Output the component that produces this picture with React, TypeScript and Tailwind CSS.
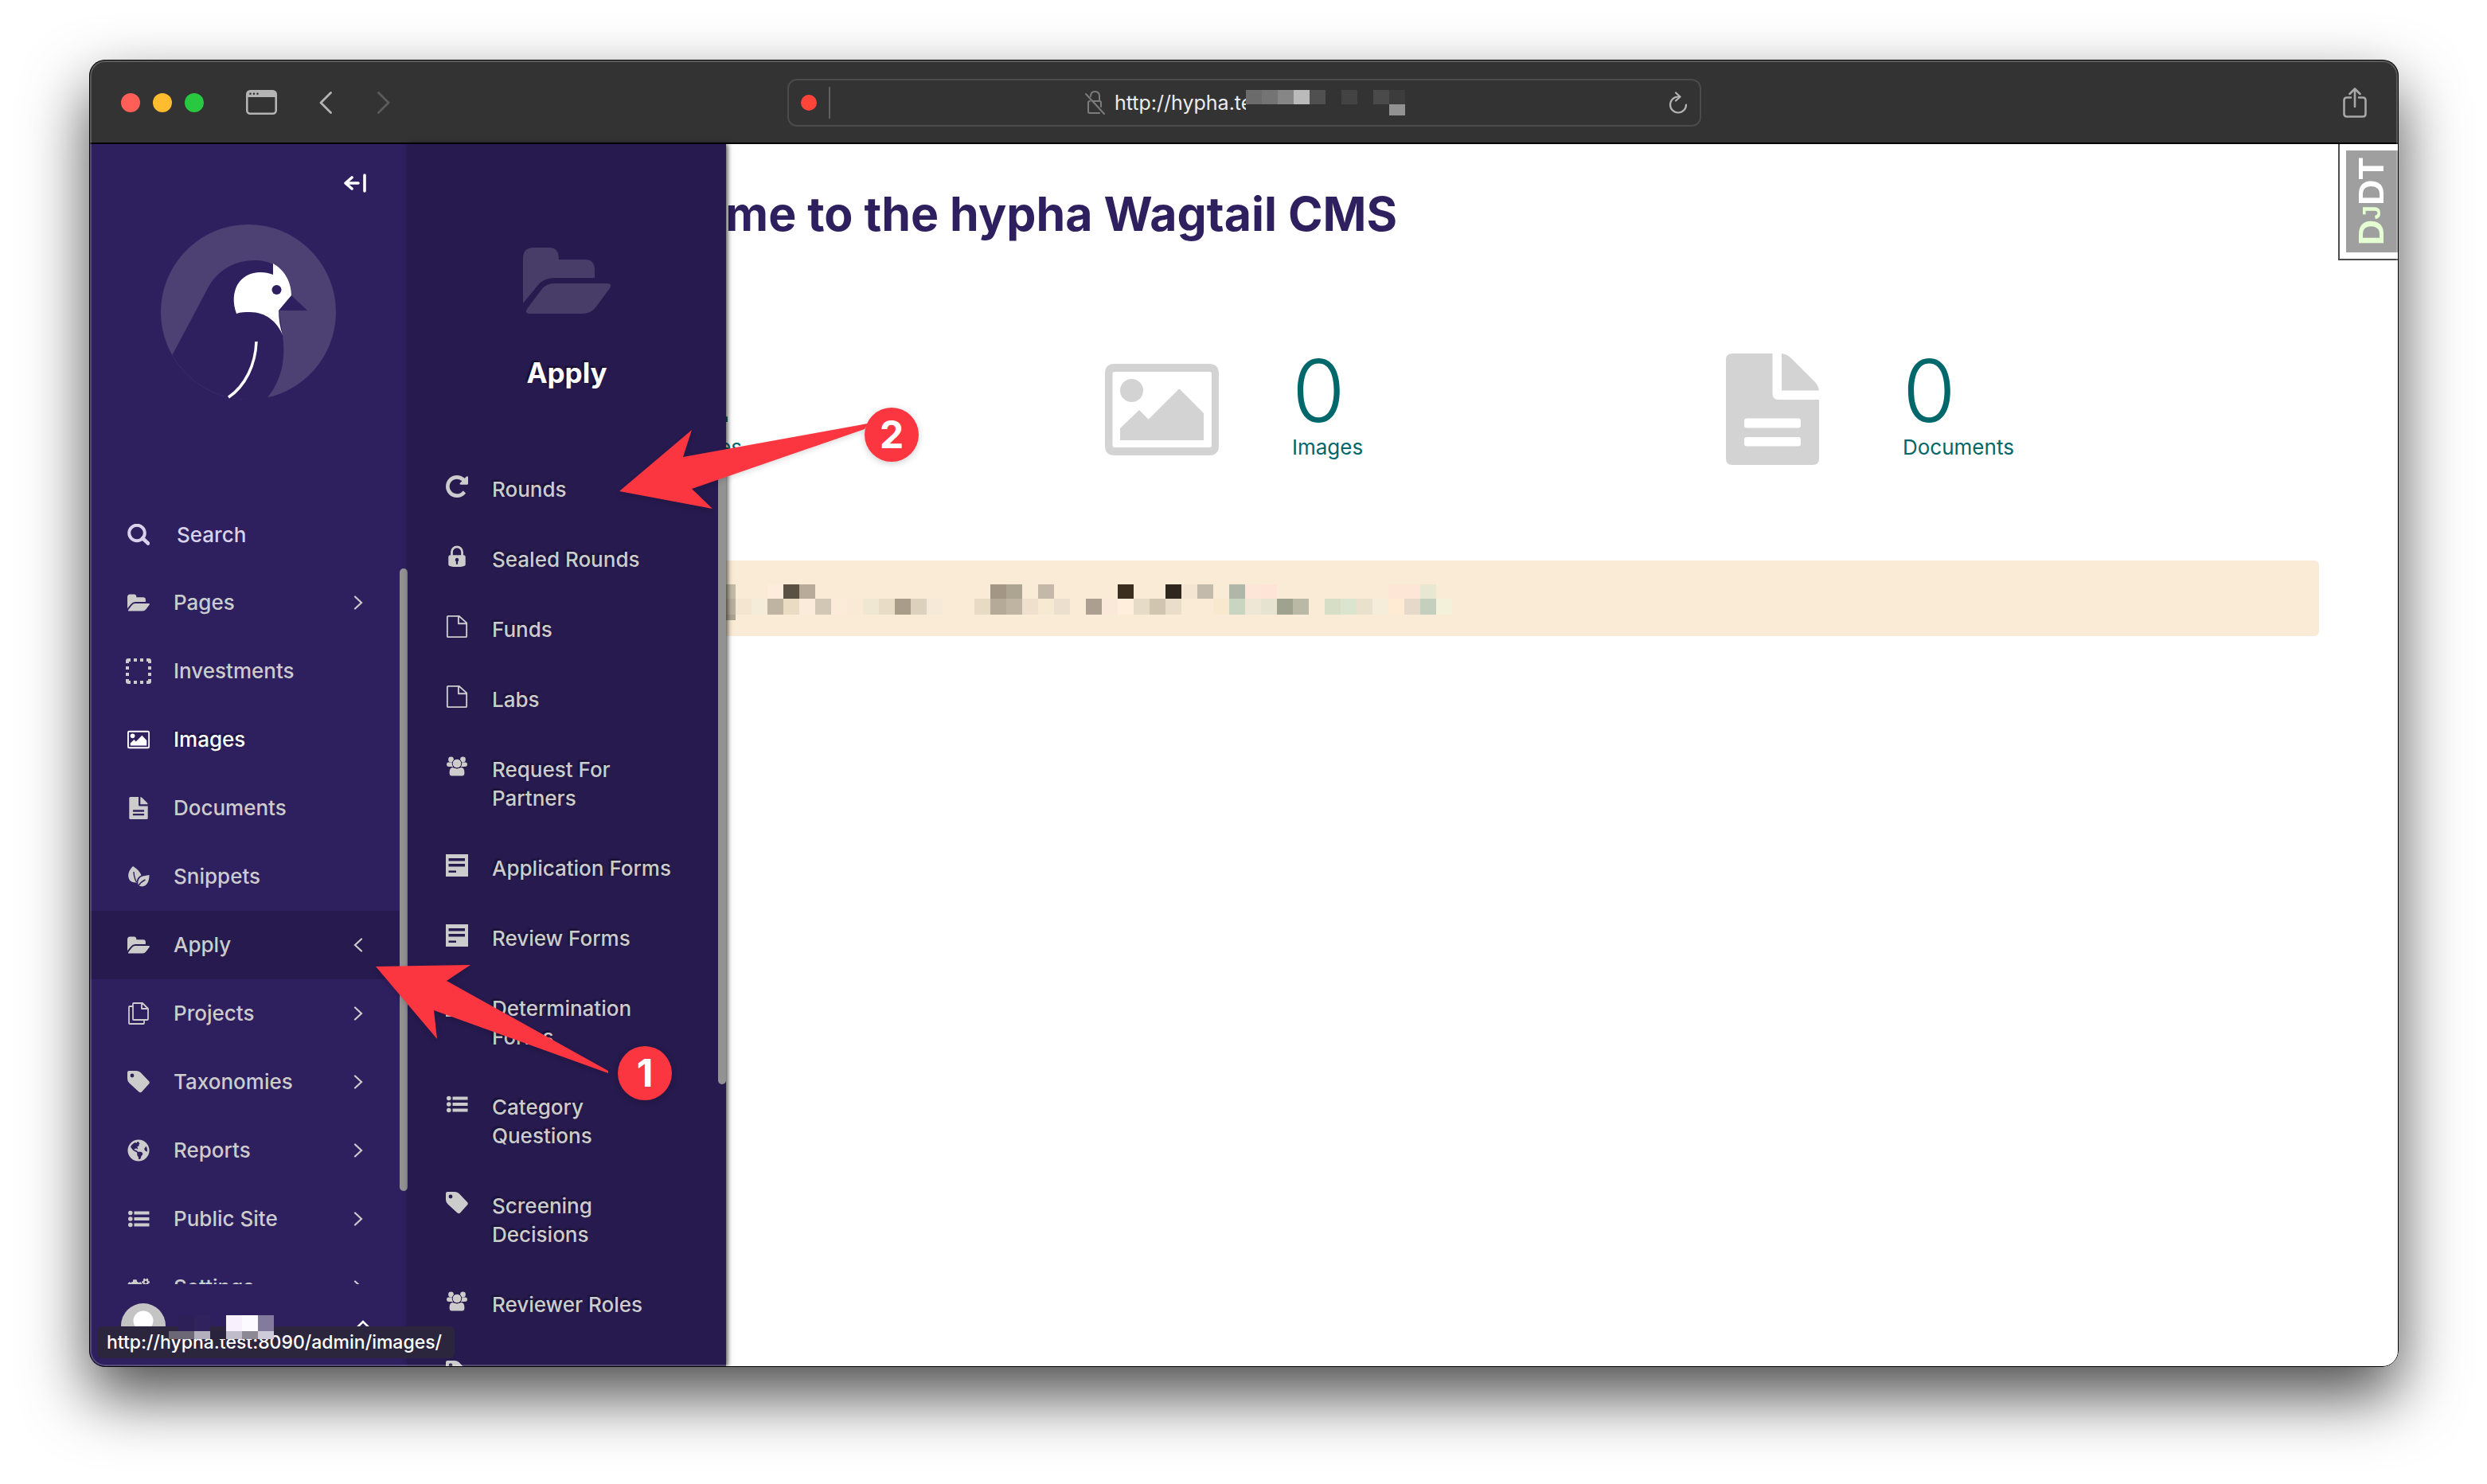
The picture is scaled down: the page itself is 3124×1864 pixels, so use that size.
import React from "react";
import { FaCogs, FaGlobeAmericas } from "react-icons/fa";

type IconProps = { className?: string };

/* ---------- icons ---------- */

const FolderOpen = ({ className }: IconProps) => (
  <svg viewBox="0 0 110 83" className={className} fill="currentColor" aria-hidden="true">
    <path d="M0 70V14Q0 0 13 0H33Q45 0 45 15H78Q90 15 90 28V38H39Q26 38 18 48Z" />
    <path d="M39 45H106Q112 45 109 51L92 74Q86 83 74 83H8Q2 83 5 77L23 53Q29 45 39 45Z" />
  </svg>
);

const PictureIcon = ({ className }: IconProps) => (
  <svg viewBox="0 0 143 115" className={className} fill="currentColor" aria-hidden="true">
    <path
      fillRule="evenodd"
      d="M12 0H131Q143 0 143 12V103Q143 115 131 115H12Q0 115 0 103V12Q0 0 12 0ZM12 10Q9.500 10 9.500 12.500V102.500Q9.500 105 12 105H131.500Q134 105 134 102.500V12.500Q134 10 131.500 10Z"
    />
    <circle cx="33.500" cy="33.500" r="14.500" />
    <path d="M19 96V81L43 58L54.700 69.700L93.300 31.300L124 62V96Z" />
  </svg>
);

const DocIcon = ({ className }: IconProps) => (
  <svg viewBox="0 0 117 140" className={className} fill="currentColor" aria-hidden="true">
    <path
      fillRule="evenodd"
      d="M8 0H58.500V50Q58.500 58 66 58H117V132Q117 140 109 140H8Q0 140 0 132V8Q0 0 8 0ZM26 81.500Q23 81.500 23 84.500V90.500Q23 93.500 26 93.500H91Q94 93.500 94 90.500V84.500Q94 81.500 91 81.500ZM26 105Q23 105 23 108V113.500Q23 116.500 26 116.500H91Q94 116.500 94 113.500V108Q94 105 91 105Z"
    />
    <path d="M70 0Q77 1 82 6L111 35Q116 40 117 46.500H70Z" />
  </svg>
);

const SearchIcon = ({ className }: IconProps) => (
  <svg viewBox="0 0 28 28" className={className} fill="none" stroke="currentColor" aria-hidden="true">
    <circle cx="12" cy="11.500" r="9.800" strokeWidth="4" />
    <path d="M19 18L26 24.500" strokeWidth="4.500" strokeLinecap="round" />
  </svg>
);

const PlaceholderIcon = ({ className }: IconProps) => (
  <svg viewBox="0 0 32 32" className={className} fill="currentColor" aria-hidden="true">
    <path d="M0 6V3Q0 0 3 0H6V4H4V6ZM26 0H29Q32 0 32 3V6H28V4H26ZM32 26V29Q32 32 29 32H26V28H28V26ZM6 32H3Q0 32 0 29V26H4V28H6Z" />
    <path d="M10 0h4v4h-4zM18 0h4v4h-4zM10 28h4v4h-4zM18 28h4v4h-4zM0 10h4v4H0zM0 18h4v4H0zM28 10h4v4h-4zM28 18h4v4h-4z" />
  </svg>
);

const LeavesIcon = ({ className }: IconProps) => (
  <svg viewBox="0 0 28 28" className={className} aria-hidden="true">
    <path
      fill="currentColor"
      d="M7 1C12 4 16 8 17.500 12.500C14 14 11.500 17 12 21.500C8 22 4 21 2 17C-.5 11 3 5 7 1Z"
    />
    <path
      fill="currentColor"
      d="M27.500 12C27.500 18 26 24 21 26C18 27 15.500 26 14 25C12.500 21.500 13.500 17 17 14.500C20 12.500 24 13 27.500 12Z"
    />
    <path d="M8 8Q8.500 16 11.500 21M14 25.500Q17 20.500 22.500 18" fill="none" stroke="#2e1f5e" strokeWidth="1.400" />
  </svg>
);

const CopyIcon = ({ className }: IconProps) => (
  <svg viewBox="0 0 28 28" className={className} fill="none" stroke="currentColor" strokeWidth="1.800" strokeLinejoin="round" aria-hidden="true">
    <path d="M8 1H19L26 8V21Q26 22 25 22H8Q7 22 7 21V2Q7 1 8 1ZM18 1.500V8H25.500" />
    <path d="M7 5H3Q2 5 2 6V26Q2 27 3 27H20Q21 27 21 26V22" />
  </svg>
);

const TagIcon = ({ className }: IconProps) => (
  <svg viewBox="0 0 28 28" className={className} fill="currentColor" aria-hidden="true">
    <path
      fillRule="evenodd"
      d="M2 0H11Q14 0 16.500 2L27 13Q28.500 14.500 27 16.500L18 26.500Q16.500 28 14.500 26.500L2.500 15.500Q0 13 0 10V2Q0 0 2 0ZM6 3.600A2.400 2.400 0 1 0 6 8.400A2.400 2.400 0 1 0 6 3.600Z"
    />
  </svg>
);

const ListIcon = ({ className }: IconProps) => (
  <svg viewBox="0 0 28 28" className={className} fill="currentColor" aria-hidden="true">
    <circle cx="3.800" cy="6.500" r="2.800" />
    <circle cx="3.800" cy="14" r="2.800" />
    <circle cx="3.800" cy="21.500" r="2.800" />
    <path d="M8.500 4.500H27.500V8.500H8.500ZM8.500 12H27.500V16H8.500ZM8.500 19.500H27.500V23.500H8.500Z" />
  </svg>
);

const RepeatIcon = ({ className }: IconProps) => (
  <svg viewBox="128 128 1536 1536" className={className} fill="currentColor" aria-hidden="true">
    <path d="M1664 256v448q0 26-19 45t-45 19h-448q-42 0-59-40-17-39 14-69l138-138q-148-137-349-137-104 0-198.500 40.500t-163.500 109.500-109.500 163.500-40.500 198.500 40.500 198.500 109.500 163.500 163.500 109.500 198.500 40.500q119 0 225-52t179-147q7-10 23-12 15 0 25 9l137 138q9 8 9.500 20.500t-7.500 22.500q-109 132-264 204.500t-327 72.500q-156 0-298-61t-245-164-164-245-61-298 61-298 164-245 245-164 298-61q147 0 284.500 55.500t244.500 156.500l130-129q29-31 70-14 39 17 39 59z" />
  </svg>
);

const LockIcon = ({ className }: IconProps) => (
  <svg viewBox="0 0 28 30" className={className} aria-hidden="true">
    <path d="M7 14V9A7 7 0 0 1 21 9V14" fill="none" stroke="currentColor" strokeWidth="3" />
    <path
      fill="currentColor"
      fillRule="evenodd"
      d="M5 13H23Q25.500 13 25.500 15.500V26Q25.500 29 14 29Q2.500 29 2.500 26V15.500Q2.500 13 5 13ZM14 17A2.600 2.600 0 0 0 12.800 21.800V25.500H15.200V21.800A2.600 2.600 0 0 0 14 17Z"
    />
  </svg>
);

const PageIcon = ({ className }: IconProps) => (
  <svg viewBox="0 0 28 30" className={className} fill="none" stroke="currentColor" strokeWidth="2" strokeLinejoin="round" aria-hidden="true">
    <path d="M2 1H17L27 10V28Q27 29 26 29H2Q1 29 1 28V2Q1 1 2 1ZM16 1.500V11H26.500" />
  </svg>
);

const GroupIcon = ({ className }: IconProps) => (
  <svg viewBox="0 0 28 28" className={className} aria-hidden="true">
    <g fill="currentColor">
      <circle cx="6.500" cy="5" r="3.400" />
      <circle cx="21.500" cy="5" r="3.400" />
      <path d="M1 11Q1 8.500 3 8.500H9V14H4Q1 14 1 11ZM27 11Q27 8.500 25 8.500H19V14H24Q27 14 27 11Z" />
    </g>
    <g fill="currentColor" stroke="#261a4e" strokeWidth="1">
      <path d="M4 22Q4 15 8.500 14.500Q14 17.500 19.500 14.500Q24 15 24 22Q24 26 21 26H7Q4 26 4 22Z" />
      <circle cx="14" cy="10" r="5.800" />
    </g>
  </svg>
);

const FormIcon = ({ className }: IconProps) => (
  <svg viewBox="0 0 28 28" className={className} fill="currentColor" aria-hidden="true">
    <path fillRule="evenodd" d="M0 0H28V28H0ZM3.500 5V8.500H24V5ZM3.500 12V15.500H24V12ZM3.500 20.500V23H13V20.500Z" />
  </svg>
);

const Chevron = ({ dir, className }: { dir: "left" | "right"; className?: string }) => (
  <svg viewBox="0 0 12 18" className={className} fill="none" stroke="currentColor" strokeWidth="2.200" strokeLinecap="round" aria-hidden="true">
    <path d={dir === "right" ? "M2 1.500L10 9L2 16.500" : "M10 1.500L2 9L10 16.500"} />
  </svg>
);

const WagtailLogo = () => (
  <svg viewBox="0 0 220 220" className="h-[220px] w-[220px]" role="img" aria-label="Wagtail">
    <circle cx="110" cy="110" r="110" fill="#4d4073" />
    <path
      fill="#2e1f5e"
      d="M14.500 163.700L59 80C72 56 94 45 118 45C127 45 135 47 141 50L164 89L184 108H148L153 139C157 170 152 196 132 220H110A110 110 0 0 1 14.500 163.700Z"
    />
    <path
      fill="#fff"
      d="M141 49C154 56 164 71 164 89L148 108C148 119 150 130 153 139C146 122 132 110 112 110C106 110 100 110 95 112C90 98 91 86 96 76C104 61 124 56 141 63Z"
    />
    <circle cx="145.500" cy="82" r="6" fill="#2e1f5e" />
    <path d="M120 147C119 176 106 203 85 217" fill="none" stroke="#fff" strokeWidth="3.500" />
  </svg>
);

/* ---------- pixelated text ---------- */

type MosaicRow = { height: string; cells: Record<number, string> };

const Mosaic = ({ rows, count }: { rows: MosaicRow[]; count: number }) => (
  <div aria-hidden="true">
    {rows.map((row, r) => (
      <div key={r} className={`flex ${row.height}`}>
        {Array.from({ length: count }, (_, i) => (
          <span key={i} className="w-5 shrink-0" style={{ backgroundColor: row.cells[i] }} />
        ))}
      </div>
    ))}
  </div>
);

const urlMosaic: MosaicRow[] = [
  { height: "h-[18px]", cells: { 0: "#6b6b6b", 1: "#747474", 2: "#868686", 3: "#bababa", 4: "#505050", 6: "#434343", 8: "#4a4a4a", 9: "#3c3c3c" } },
  { height: "h-[14px]", cells: { 9: "#929292" } },
];

const userMosaic: MosaicRow[] = [
  { height: "h-5", cells: { 1: "#2d2059", 2: "#30235d", 4: "#f8f0fc", 5: "#fcfaff", 6: "#827b9b" } },
  { height: "h-2.5", cells: { 0: "#6c6777", 1: "#6c6875", 2: "#b3afbd", 3: "#2a233d", 4: "#c0bcc9", 5: "#8c8995", 6: "#cecbda" } },
];

const bannerMosaic: MosaicRow[] = [
  {
    height: "h-[18px]",
    cells: {
      0: "#c3baa6", 3: "#fdecdb", 4: "#5b5143", 5: "#b8ab99", 17: "#a39684", 18: "#ada492", 20: "#c4b9a8", 25: "#3c2e1f",
      28: "#2f261e", 29: "#f4e4d2", 30: "#c3baac", 32: "#b1b7a8", 33: "#fde6d7", 34: "#fde4d6", 42: "#fde6d6", 43: "#fde6d6", 44: "#e8e8d2",
    },
  },
  {
    height: "h-5",
    cells: {
      0: "#b9af9d", 1: "#f3e5d0", 2: "#f4ecd8", 3: "#bfb3a1", 4: "#e9dcc3", 5: "#fbebdb", 6: "#d1c7b4", 7: "#fdebda", 8: "#f8ead5", 9: "#efe7d2",
      10: "#e9dcc7", 11: "#a99d8a", 12: "#dcd1bd", 13: "#f6e9d7", 16: "#e7dbc4", 17: "#b4aa97", 18: "#bfb3a2", 19: "#efe0cd", 20: "#f7ead3",
      21: "#ecdfce", 23: "#ac9f8f", 24: "#fae9d9", 25: "#feeedb", 26: "#e5dbc6", 27: "#d0c5ae", 28: "#eaddca", 31: "#f8e8ce", 32: "#c8d6c1",
      33: "#efe7d5", 34: "#e6e4d0", 35: "#9fa28f", 36: "#b9b9a5", 38: "#d6dfc5", 39: "#dae4ce", 40: "#e9e1cb", 41: "#f5ecda", 42: "#ffebd3",
      43: "#e7d9c9", 44: "#c5cfbd", 45: "#f3f1d9",
    },
  },
  { height: "h-[7px]", cells: { 0: "#aea492" } },
];

/* ---------- browser chrome ---------- */

const TitleBar = () => (
  <header className="flex h-[106px] shrink-0 items-center border-b-2 border-black bg-[#333333] pt-[3px] pr-10 pl-10">
    <div className="flex flex-1 items-center">
      <div className="flex gap-4">
        <button aria-label="Close window" className="h-6 w-6 rounded-full bg-[#ff5f57]" />
        <button aria-label="Minimize window" className="h-6 w-6 rounded-full bg-[#febc2e]" />
        <button aria-label="Zoom window" className="h-6 w-6 rounded-full bg-[#28c840]" />
      </div>
      <button aria-label="Tab overview" className="ml-[53px] text-[#b4b4b4]">
        <svg viewBox="0 0 39 31" className="h-[31px] w-[39px]" fill="none" aria-hidden="true">
          <rect x="1.300" y="1.300" width="36.400" height="28.400" rx="4" stroke="currentColor" strokeWidth="2.600" />
          <path d="M1 9V5Q1 1 5 1H34Q38 1 38 5V9Z" fill="currentColor" />
          <circle cx="5.500" cy="4.800" r="1.300" fill="#333" />
          <circle cx="10" cy="4.800" r="1.300" fill="#333" />
          <circle cx="14.500" cy="4.800" r="1.300" fill="#333" />
        </svg>
      </button>
      <button aria-label="Back" className="ml-[53px] text-[#b4b4b4]">
        <svg viewBox="0 0 16 28" className="h-7 w-4" fill="none" stroke="currentColor" strokeWidth="2.800" strokeLinecap="round" strokeLinejoin="round" aria-hidden="true">
          <path d="M14.500 1.500L2 14L14.500 26.500" />
        </svg>
      </button>
      <button aria-label="Forward" className="ml-[57px] text-[#5c5c5c]">
        <svg viewBox="0 0 16 28" className="h-7 w-4" fill="none" stroke="currentColor" strokeWidth="2.800" strokeLinecap="round" strokeLinejoin="round" aria-hidden="true">
          <path d="M1.500 1.500L14 14L1.500 26.500" />
        </svg>
      </button>
    </div>
    <div className="flex h-[60px] w-[1148px] items-center rounded-xl border-2 border-[#4b4b4d] px-[15px]">
      <span className="h-5 w-5 rounded-full bg-[#ff453a]" />
      <span className="ml-[15px] h-10 w-0.5 bg-[#606060]" />
      <div className="flex flex-1 items-center justify-center pr-2.5">
        <svg viewBox="0 0 25 30" className="h-[30px] w-[25px] text-[#7c7c7c]" fill="none" stroke="currentColor" strokeWidth="2" strokeLinecap="round" aria-hidden="true">
          <path d="M7 7Q7 1 12.500 1Q18 1 18 7V13M18 13Q20 13 20 15V20M9 13H18M6 13Q4 13 4 15V26Q4 28 6 28H18" />
          <path d="M1 4L24 29" />
        </svg>
        <input
          type="text"
          aria-label="Address"
          readOnly
          value="http://hypha.test"
          className="ml-3 w-[165px] bg-transparent text-[25px] leading-8 text-[#ececec] outline-none"
        />
        <Mosaic rows={urlMosaic} count={10} />
      </div>
      <button aria-label="Reload page" className="text-[#b4b4b4]">
        <svg viewBox="0 0 24 28" className="h-7 w-6" fill="none" stroke="currentColor" strokeWidth="2.200" strokeLinecap="round" strokeLinejoin="round" aria-hidden="true">
          <path d="M12 6.500A10 10 0 1 0 22 16.500" />
          <path d="M9 1.500L14.500 6.500L9 11.500" />
        </svg>
      </button>
    </div>
    <div className="flex flex-1 justify-end">
      <button aria-label="Share" className="text-[#a8a8a8]">
        <svg viewBox="0 0 30 38" className="h-[38px] w-[30px]" fill="none" stroke="currentColor" strokeWidth="2.600" strokeLinecap="round" strokeLinejoin="round" aria-hidden="true">
          <path d="M10 12.500H5Q1.500 12.500 1.500 16V33Q1.500 36.500 5 36.500H25Q28.500 36.500 28.500 33V16Q28.500 12.500 25 12.500H20" />
          <path d="M15 24V2M8.500 8L15 1.500L21.500 8" />
        </svg>
      </button>
    </div>
  </header>
);

/* ---------- sidebar ---------- */

type NavItem = {
  label: string;
  icon: (p: IconProps) => React.ReactNode;
  iconClass?: string;
  sub?: boolean;
  state?: "open" | "hover";
};

const navItems: NavItem[] = [
  { label: "Pages", icon: FolderOpen, sub: true },
  { label: "Investments", icon: PlaceholderIcon, iconClass: "h-8 w-8 -mx-0.5" },
  { label: "Images", icon: PictureIcon, state: "hover" },
  { label: "Documents", icon: DocIcon },
  { label: "Snippets", icon: LeavesIcon },
  { label: "Apply", icon: FolderOpen, sub: true, state: "open" },
  { label: "Projects", icon: CopyIcon, sub: true },
  { label: "Taxonomies", icon: TagIcon, sub: true },
  { label: "Reports", icon: ({ className }) => <FaGlobeAmericas className={className} />, sub: true },
  { label: "Public Site", icon: ListIcon, sub: true },
  { label: "Settings", icon: ({ className }) => <FaCogs className={className} />, sub: true },
];

const rowClass = "flex h-[86px] w-full items-center gap-[30px] pl-12 pr-14 text-left text-[26px] leading-9 font-medium";

const NavRow = ({ item }: { item: NavItem }) => {
  const Icon = item.icon;
  const icon = <Icon className={`shrink-0 ${item.iconClass ?? "h-7 w-7"}`} />;
  if (item.sub) {
    const open = item.state === "open";
    return (
      <button aria-expanded={open} className={`${rowClass} ${open ? "bg-[#261a4e]" : ""} text-[#cccccc]`}>
        {icon}
        <span className="flex-1">{item.label}</span>
        <Chevron dir={open ? "left" : "right"} className="h-[18px] w-3" />
      </button>
    );
  }
  return (
    <a
      href="#"
      className={`${rowClass} ${item.state === "hover" ? "text-white [text-shadow:-2px_-2px_1px_#00000066]" : "text-[#cccccc]"}`}
    >
      {icon}
      <span>{item.label}</span>
    </a>
  );
};

const Sidebar = () => (
  <aside className="relative flex w-[400px] shrink-0 flex-col bg-[#2e1f5e]">
    <div className="flex h-[101px] items-start justify-end pt-[37px] pr-[52px]">
      <button aria-label="Collapse sidebar" className="text-white">
        <svg viewBox="0 0 28 24" className="h-6 w-7" fill="none" stroke="currentColor" strokeWidth="3.600" strokeLinecap="round" strokeLinejoin="round" aria-hidden="true">
          <path d="M18 12H3M10 5L2 12L10 19M26 2V22" />
        </svg>
      </button>
    </div>
    <a href="#" className="flex justify-center">
      <WagtailLogo />
    </a>
    <form className="mt-[127px] flex h-[85px] shrink-0 items-center gap-[34px] pr-12 pl-12 text-[#d9d2ec]">
      <SearchIcon className="h-7 w-7 shrink-0" />
      <input
        type="search"
        aria-label="Search"
        placeholder="Search"
        className="w-full bg-transparent text-[26px] leading-9 font-medium outline-none placeholder:text-[#d9d2ec] placeholder:opacity-100"
      />
    </form>
    <div className="relative min-h-0 flex-1 overflow-hidden">
      <nav aria-label="Main menu">
        {navItems.map((item) => (
          <NavRow key={item.label} item={item} />
        ))}
      </nav>
      <div className="absolute top-0 right-0 h-[782px] w-2.5 rounded-full bg-[#929292]" />
    </div>
    <div className="flex h-[104px] shrink-0 items-start pt-6 pr-[46px] pl-10">
      <svg viewBox="0 0 56 56" className="h-14 w-14" aria-hidden="true">
        <circle cx="28" cy="28" r="28" fill="#c4c4c4" />
        <circle cx="28" cy="22" r="12.500" fill="#fff" />
        <path d="M8 47Q14 36 28 36Q42 36 48 47A28 28 0 0 1 8 47Z" fill="#fff" />
      </svg>
      <button aria-label="Account menu" className="ml-auto text-white">
        <svg viewBox="0 0 20 40" className="h-10 w-5" fill="none" stroke="currentColor" strokeWidth="2.600" strokeLinecap="round" aria-hidden="true">
          <path d="M2 31L10 23L18 31" />
        </svg>
      </button>
    </div>
  </aside>
);

/* ---------- submenu ---------- */

const subItems: { label: string; icon: (p: IconProps) => React.ReactNode }[] = [
  { label: "Rounds", icon: RepeatIcon },
  { label: "Sealed Rounds", icon: LockIcon },
  { label: "Funds", icon: PageIcon },
  { label: "Labs", icon: PageIcon },
  { label: "Request For Partners", icon: GroupIcon },
  { label: "Application Forms", icon: FormIcon },
  { label: "Review Forms", icon: FormIcon },
  { label: "Determination Forms", icon: FormIcon },
  { label: "Category Questions", icon: ListIcon },
  { label: "Screening Decisions", icon: TagIcon },
  { label: "Reviewer Roles", icon: GroupIcon },
  { label: "", icon: TagIcon },
];

const Submenu = () => (
  <section
    aria-label="Apply"
    className="absolute inset-y-0 left-0 z-10 w-[400px] bg-[#261a4e] shadow-[2px_0_6px_rgba(0,0,0,0.7)]"
  >
    <div className="h-full overflow-hidden">
      <div className="flex flex-col items-center pt-[130px]">
        <FolderOpen className="h-[83px] w-[110px] text-[#483c68]" />
        <h2 className="mt-[50px] mb-[79px] text-[35px] leading-[48px] font-bold text-white [text-shadow:-2px_-2px_2px_#00000088]">
          Apply
        </h2>
      </div>
      <ul>
        {subItems.map(({ label, icon: Icon }) => (
          <li key={label}>
            <a href="#" className="flex gap-[30px] py-[26px] pr-[50px] pl-12 text-[26px] leading-9 font-medium text-[#cccccc]">
              <Icon className="h-7 w-7 shrink-0" />
              <span className="[text-shadow:-2px_-2px_2px_#00000066]">{label}</span>
            </a>
          </li>
        ))}
      </ul>
    </div>
    <div className="absolute top-[404px] right-0 h-[777px] w-2.5 rounded-full bg-[#929292]" />
  </section>
);

/* ---------- dashboard ---------- */

const Stat = ({ icon, count, label }: { icon: React.ReactNode; count: number; label: string }) => (
  <a href="#" className="flex h-[142px] items-center gap-[84px] text-[#00676a]">
    <span className="flex w-40 shrink-0 justify-center text-[#d3d3d3]">{icon}</span>
    <span className="flex flex-col pb-2.5">
      <span className="text-[108px] leading-[106px] font-light">{count}</span>
      <span className="text-[26px] leading-9">{label}</span>
    </span>
  </a>
);

const DebugHandle = () => (
  <button
    aria-label="Show debug toolbar"
    className="absolute top-0 right-0 border-b-2 border-l-2 border-[#4d4d4d] bg-white pt-2 pb-2 pl-2"
  >
    <span className="flex h-32 w-[66px] items-center justify-center bg-[#9f9f9f] pr-1">
      <span className="rotate-180 font-['Liberation_Sans'] text-[45px] leading-none font-bold text-white [writing-mode:vertical-rl]">
        <span className="text-[#e6ffd2]">
          D<span className="text-[32px]">J</span>
        </span>
        DT
      </span>
    </span>
  </button>
);

const Dashboard = () => (
  <main className="relative min-w-0 flex-1 bg-white px-[100px] pt-[52px]">
    <h1 className="pl-[119px] text-[59px] leading-[72px] font-bold whitespace-nowrap text-[#2e1f5e]">
      Welcome to the hypha Wagtail CMS
    </h1>
    <div className="mt-[138px] grid grid-cols-3">
      <Stat icon={<FolderOpen className="h-[106px] w-[140px]" />} count={2} label="Pages" />
      <Stat icon={<PictureIcon className="h-[115px] w-[143px]" />} count={0} label="Images" />
      <Stat icon={<DocIcon className="h-[140px] w-[117px]" />} count={0} label="Documents" />
    </div>
    <div className="mt-[119px] h-[95px] rounded-md bg-[#faebd7] pt-[30px] pl-[292px]">
      <Mosaic rows={bannerMosaic} count={46} />
    </div>
    <DebugHandle />
  </main>
);

/* ---------- overlays ---------- */

const StatusBar = () => (
  <div className="absolute bottom-[11px] left-2.5 z-20">
    <div className="rounded-md bg-[#2b253d] pr-4 pl-3 text-[23px] leading-10 font-medium whitespace-nowrap text-white">
      http://hypha.test:8090/admin/images/
    </div>
    <div className="absolute bottom-6 left-[90px] overflow-hidden">
      <div className="-ml-2">
        <Mosaic rows={userMosaic} count={7} />
      </div>
    </div>
  </div>
);

const badgeClass =
  "absolute flex h-[68px] w-[68px] items-center justify-center rounded-full bg-[#fb3640] text-[48px] leading-none font-bold text-white shadow-[0_2px_8px_rgba(0,0,0,0.2)]";

const Callouts = () => (
  <div className="pointer-events-none absolute inset-0 z-30">
    <svg viewBox="0 0 320 120" className="absolute top-[455px] left-[660px] h-[120px] w-[320px] drop-shadow-md" aria-hidden="true">
      <path fill="#fb3640" d="M6 87L97 10L86 44L318 2L314 9L97 84L123 109Z" />
    </svg>
    <span className={`${badgeClass} top-[437px] left-[974px]`}>2</span>
    <svg viewBox="0 0 300 150" className="absolute top-[1130px] left-[352px] h-[150px] w-[300px] drop-shadow-md" aria-hidden="true">
      <path fill="#fb3640" d="M8 9L127 7L97 27L300 140L300 143L81 64L85 100Z" />
    </svg>
    <span className={`${badgeClass} top-[1239px] left-[664px]`}>1</span>
  </div>
);

export default function App() {
  return (
    <div className="h-screen overflow-hidden bg-white pt-[75px] pr-[111px] pb-[147px] pl-28 font-['Inter',sans-serif]">
      <div className="relative h-full rounded-[20px] shadow-[0_36px_80px_rgba(0,0,0,0.7)]">
        <div className="relative flex h-full flex-col overflow-hidden rounded-[20px]">
          <TitleBar />
          <div className="flex min-h-0 flex-1">
            <Sidebar />
            <div className="relative flex min-w-0 flex-1">
              <Submenu />
              <Dashboard />
            </div>
          </div>
          <StatusBar />
          <div className="pointer-events-none absolute inset-0 z-20 rounded-[20px] border border-black shadow-[inset_0_0_0_2px_rgba(255,255,255,0.2)]" />
        </div>
        <Callouts />
      </div>
    </div>
  );
}
